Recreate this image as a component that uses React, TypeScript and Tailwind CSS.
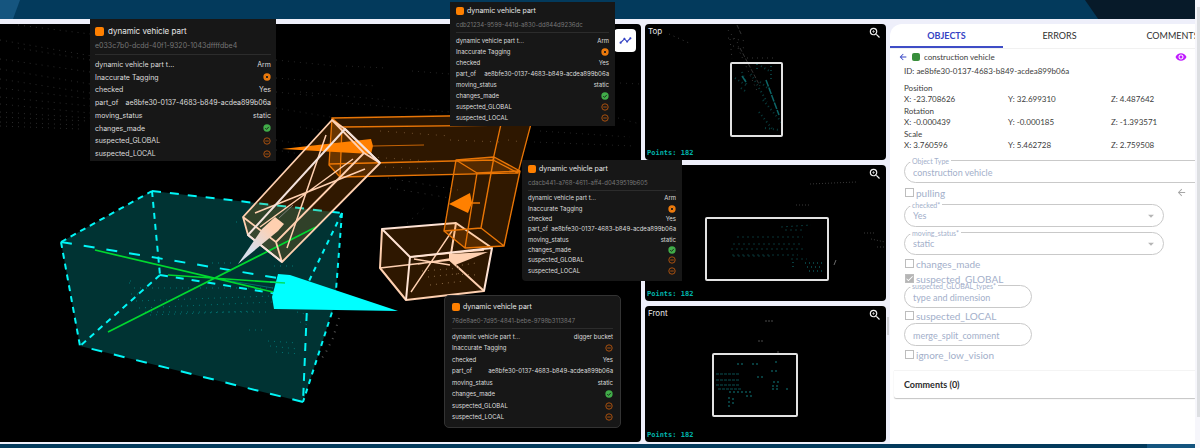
import React, { useState } from 'react';
import { clsx } from 'clsx';
import { MdArrowBack, MdArrowDropDown, MdCheck, MdTimeline, MdVisibility, MdZoomIn } from 'react-icons/md';

type Flag = 'error' | 'ok' | 'none';

interface PartCardProps {
  id: string;
  type: string;
  tagging: Flag;
  large?: boolean;
  className: string;
}

const PARENT_ID = 'ae8bfe30-0137-4683-b849-acdea899b06a';

const TRANSFORM = [
  { name: 'Position', values: ['X: -23.708626', 'Y: 32.699310', 'Z: 4.487642'] },
  { name: 'Rotation', values: ['X: -0.000439', 'Y: -0.000185', 'Z: -1.393571'] },
  { name: 'Scale', values: ['X: 3.760596', 'Y: 5.462728', 'Z: 2.759508'] },
];

const FlagIcon: React.FC<{ flag: Flag }> = ({ flag }) => {
  if (flag === 'none') {
    return (
      <svg viewBox="0 0 16 16" className="w-2 h-2" fill="none" stroke="#b8570f" strokeWidth="1.8">
        <circle cx="8" cy="8" r="6.4" />
        <path d="M4.5 8h7" />
      </svg>
    );
  }
  return (
    <svg viewBox="0 0 16 16" className="w-2 h-2" fill="none" stroke="#181818" strokeWidth="1.8">
      <circle cx="8" cy="8" r="7.3" fill={flag === 'ok' ? '#41ad49' : '#ee7b0c'} stroke="none" />
      <path d={flag === 'ok' ? 'M4.5 8.2l2.5 2.6 4.6-5' : 'M5.8 5.8l4.4 4.4M10.2 5.8l-4.4 4.4'} />
    </svg>
  );
};

// Hover card with the attributes of one vehicle part
const PartCard: React.FC<PartCardProps> = ({ id, type, tagging, large, className }) => {
  const rows: [string, React.ReactNode][] = [
    ['dynamic vehicle part t...', type],
    ['Inaccurate Tagging', <FlagIcon flag={tagging} />],
    ['checked', 'Yes'],
    ['part_of', PARENT_ID],
    ['moving_status', 'static'],
    ['changes_made', <FlagIcon flag="ok" />],
    ['suspected_GLOBAL', <FlagIcon flag="none" />],
    ['suspected_LOCAL', <FlagIcon flag="none" />],
  ];

  return (
    <section className={clsx('absolute flex flex-col bg-[#171717] text-[#dedede] whitespace-nowrap', large ? 'text-[7px]' : 'text-[6px]', className)}>
      <div className={clsx('flex items-center shrink-0', large ? 'h-[14px] gap-1' : 'h-3 gap-[3px]')}>
        <span className={clsx('rounded-[2px] bg-[#ff8000]', large ? 'w-[9px] h-[9px]' : 'w-2 h-2')} />
        <h3 className={clsx('text-[#e8e8e8]', large ? 'text-[8px]' : 'text-[7px]')}>dynamic vehicle part</h3>
      </div>
      <p className={clsx('shrink-0 border-b border-[#2c2c2c] text-[#767676]', large ? 'h-[17px] leading-4' : 'h-4 leading-[15px]')}>{id}</p>
      <dl className={clsx('flex-1 grid auto-rows-fr', large ? 'mt-[3px]' : 'mt-0.5')}>
        {rows.map(([label, value]) => (
          <div key={label} className="flex items-center justify-between leading-none">
            <dt>{label}</dt>
            <dd>{value}</dd>
          </div>
        ))}
      </dl>
    </section>
  );
};

// Lidar returns drawn as dotted strokes
const Points: React.FC<{ d: string; color: string; gap?: string; width?: number }> = ({ d, color, gap = '1 5', width = 1 }) => (
  <path d={d} fill="none" stroke={color} strokeWidth={width} strokeDasharray={gap} />
);

const Scene = () => (
  <svg viewBox="0 24 641 418" preserveAspectRatio="xMinYMin slice" className="absolute inset-0 w-full h-full">
    <defs>
      <linearGradient id="tip" x1="0" y1="1" x2="1" y2="0">
        <stop offset="0.3" stopColor="#d9deea" />
        <stop offset="0.75" stopColor="#ffd0b0" />
      </linearGradient>
    </defs>

    {/* Ground points */}
    <Points color="#2b2b2b" d="M18 25l72 9M0 40l92 16M18 48l72 12M0 59l90 13M0 69l90 15M0 79l90 14M0 88l90 11M0 97l90 9M0 104l90 9M0 112l90 6M0 117l88 4M0 122l80 3M0 126l80 3" />
    <Points color="#252525" d="M276 60l60 6M346 66l40 2M412 71l38 3M276 78l100 8M300 92l88 8M276 108l60 10M300 127l24 4M346 103l104 9M534 142l100 4M540 131l90 6M620 83l20 1M618 118l22 6M276 92l40 4M276 150l24 4M276 140l50 8" />
    <Points color="#333333" d="M402 228l24-22M388 178l70 12M390 188l60 10" gap="1 6" />

    {/* Construction vehicle */}
    <path d="M61 242L152 191L342 213L335 303L303 402L80 346Z" fill="#003333" />
    <Points color="#007272" d="M130 281h1M129 283h1M134 288h140M131 294h8M136 301l136-5M139 308l133-6M145 312h125M150 315l106-4M249 330h14M268 341l30 2M270 346l28 3M276 352l24 2" />
    <Points color="#007878" d="M212 263h20M274 266h24M236 222h1M297 312l12 3M300 322l8 3" />
    <g fill="none" stroke="#00f6f6" strokeWidth="2">
      <path d="M61 242L308 283" strokeDasharray="11 12" />
      <path d="M152 191L342 213" strokeDasharray="9 9" />
      <path d="M61 242L152 191M152 191L160 275M160 275L80 346M61 242L80 346" strokeDasharray="6 5" />
      <path d="M160 275L335 303" strokeDasharray="8 8" />
      <path d="M303 402L80 346" strokeDasharray="11 12" />
      <path d="M342 213L308 283M342 213L335 303M335 303L303 402" strokeDasharray="5 5" />
      <path d="M308 283L303 402" strokeDasharray="8 7" />
    </g>
    <path d="M225 280L273 288" stroke="#006a6a" />

    {/* Boom */}
    <path d="M332 118L503 115L531 124L518 173L340 177L329 165Z" fill="#ff8000" fillOpacity="0.18" />
    <path d="M332 118L342 127L340 177L329 165Z" fill="#ff8000" fillOpacity="0.12" />
    <g fill="none" stroke="#e87506" strokeWidth="1.3">
      <path d="M332 118L503 115L531 124L518 173L340 177L329 165ZM332 118L342 127L340 177M342 127L531 125M329 164L493 160L503 115M493 160L518 173" />
      <path d="M373 146L424 145" strokeWidth="0.8" />
    </g>
    <Points color="#70502e" d="M380 131l70 5M370 157l60 4M385 167l50 2M450 140l50 2M508 140l14 2" gap="1 7" />

    {/* Bucket */}
    <path d="M382 229L456 223L492 248L484 291L406 300L380 268Z" fill="#ff8000" fillOpacity="0.18" />
    <g fill="none" stroke="#ffd0b0" strokeWidth="2" strokeLinejoin="round">
      <path d="M382 229L380 268L406 300L484 291L450 260L456 223" />
      <path d="M380 268L450 260M452 231L411 292M410 257L484 250M414 259L450 265M418 264L462 257" strokeWidth="1.4" />
      <path d="M382 229L456 223L492 248L410 257ZM410 257L406 300M492 248L484 291" stroke="#ffe3d4" />
    </g>
    <path d="M449 254L488 252L455 265L449 260Z" fill="#ffd0b0" />
    <Points color="#8a6a45" d="M422 271l40-3M428 277l36-4M430 285l34-4M456 266l20-3M456 274l20 1" gap="1 5" />

    {/* Stick */}
    <path d="M456 160L494 157L520 171L504 246L465 248L444 231Z" fill="#ff8000" fillOpacity="0.19" />
    <g fill="none" stroke="#e87506" strokeWidth="1.4" strokeLinejoin="round">
      <path d="M456 160L494 157L520 171L477 173ZM444 231L481 228L504 246L465 248ZM456 160L444 231M494 157L481 228M520 171L504 246M477 173L465 248M470 203H480" />
    </g>
    <path d="M449 204L470 193L472 203L468 213Z" fill="#ff8000" />

    {/* Arm */}
    <path d="M332 120L345 129L380 163L282 262L248 235L243 217Z" fill="#ff8000" fillOpacity="0.19" />
    <path d="M243 217L276 242L282 262L248 235Z" fill="#ffffff" fillOpacity="0.04" />
    <path d="M282 149L371 139L373 146L371 154Z" fill="#ff8000" />
    <g stroke="#00d830" strokeWidth="1.7">
      <path d="M95 250L273 292M168 275L285 283M108 332L316 227" />
    </g>
    <g fill="none" stroke="#ffd0b0" strokeWidth="1.8" strokeLinejoin="round">
      <path d="M332 120L243 217L248 235L282 262L380 163L345 129ZM332 120L364 153L380 163M364 153L276 242L243 217M276 242L282 262" />
      <path d="M326 135L287 248M353 159L260 227M365 169L255 213" strokeWidth="1.5" />
      <path d="M380 163L345 129L248 235L282 262" stroke="#f3e2dc" strokeWidth="2" />
      <path d="M279 218L293 205" stroke="#8b8b8b" strokeWidth="0.8" />
    </g>
    <path d="M275 217L284 224L278 231L238 264L262 229Z" fill="url(#tip)" />

    {/* Heading arrow */}
    <path d="M278 274L290 275L398 311L274 309L272 297Z" fill="#00ffff" />
    <path d="M270 282L285 283" stroke="#00e060" strokeWidth="1.7" />
    <Points color="#505050" d="M339 318l-6 20-8 16-4 5" gap="1 6" width={2} />
  </svg>
);

const SideView: React.FC<{ label?: string; children: React.ReactNode }> = ({ label, children }) => (
  <section className="relative flex-1 min-h-0 flex flex-col justify-between rounded-sm bg-black overflow-hidden">
    <svg viewBox="0 0 241 136" className="absolute inset-0 w-full h-full">
      {children}
    </svg>
    <div className="relative flex items-start justify-between pl-[3px] pr-1 pt-0.5">
      <h2 className="font-[Inter] text-[8px] leading-[11px] text-[#e8e8e8]">{label}</h2>
      <button aria-label="Zoom in" className="text-[#eeeeee]">
        <MdZoomIn className="w-[14px] h-[14px]" />
      </button>
    </div>
    <p className="relative pl-0.5 pb-0.5 font-['DejaVu_Sans_Mono',monospace] text-[7px] font-bold leading-[10px] text-[#00b4ac]">Points: 182</p>
  </section>
);

const Check: React.FC<{ id: string; checked?: boolean; className: string }> = ({ id, checked, className }) => (
  <div className={clsx('flex items-center gap-0.5 px-px text-[10px] text-[#a3afca]', className)}>
    <span className="relative flex">
      <input
        id={id}
        type="checkbox"
        defaultChecked={checked}
        disabled
        className="appearance-none w-[9px] h-[9px] border border-[#bdbdbd] bg-white checked:bg-[#b5b5b5]"
      />
      {checked && <MdCheck className="absolute inset-0 w-[9px] h-[9px] text-white" />}
    </span>
    <label htmlFor={id} className="leading-none">{id}</label>
  </div>
);

const Field: React.FC<{ id: string; label?: string; value: string; select?: boolean; className: string }> = ({ id, label, value, select, className }) => {
  const box = 'w-full h-full appearance-none rounded-full border border-[#c9c9c9] bg-transparent px-2 pt-px text-[9px] text-[#a3afca] placeholder:text-[#a3afca] opacity-100';

  return (
    <div className={clsx('relative h-[23px]', className)}>
      {select ? (
        <select id={id} disabled defaultValue={value} className={box}>
          <option>{value}</option>
        </select>
      ) : (
        <input id={id} disabled aria-label={id} defaultValue={label ? value : ''} placeholder={value} className={box} />
      )}
      {label && (
        <label htmlFor={id} className="absolute left-[6px] top-0 h-[2px] px-[2px] bg-white text-[7px] leading-[2px] text-[#a3afca]">
          {label}
        </label>
      )}
      {select && <MdArrowDropDown className="absolute right-[6px] top-[5px] w-[14px] h-[14px] text-[#b5b5b5] pointer-events-none" />}
    </div>
  );
};

const ObjectPanel = () => {
  const [tab, setTab] = useState('OBJECTS');

  return (
    <aside className="w-[305px] shrink-0 overflow-hidden rounded-tl-xl bg-white font-[Lato] text-[8px] text-[#3c3c3c]">
      <nav className="flex h-[25px] w-[339px] border-b border-[#f1f1f1]">
        {['OBJECTS', 'ERRORS', 'COMMENTS'].map((name) => (
          <button
            key={name}
            onClick={() => setTab(name)}
            className={clsx('flex-1 border-b-2 pt-0.5 text-[9px]', tab === name ? 'border-[#3f4dc6] font-bold text-[#3443c4]' : 'border-transparent text-[#303030]')}
          >
            {name}
          </button>
        ))}
      </nav>

      <div className="flex h-4 items-center pl-2 pr-2">
        <button aria-label="Back" className="text-[#3443c4]">
          <MdArrowBack className="w-[10px] h-[10px]" />
        </button>
        <span className="ml-1 mr-1 w-2 h-2 rounded-[2px] bg-[#388e3c]" />
        <span className="flex-1">construction vehicle</span>
        <button aria-label="Toggle visibility" className="text-[#c01cff]">
          <MdVisibility className="w-3 h-3" />
        </button>
      </div>

      <div className="pl-[14px]">
        <p className="h-[13px] leading-[13px]">ID: {PARENT_ID}</p>
        <dl className="mt-1">
          {TRANSFORM.map(({ name, values }) => (
            <div key={name}>
              <dt className="leading-3">{name}</dt>
              <dd className="grid grid-cols-[104px_103px_auto] leading-[11px]">
                {values.map((value) => <span key={value}>{value}</span>)}
              </dd>
            </div>
          ))}
        </dl>

        <form className="mt-[9px]">
          <Field id="Object Type" label="Object Type" value="construction vehicle" className="w-[320px]" />
          <div className="flex items-center justify-between pr-2">
            <Check id="pulling" className="h-[19px]" />
            <button type="button" aria-label="Reset" className="text-[#a6a6a6]">
              <MdArrowBack className="w-[11px] h-[11px]" />
            </button>
          </div>
          <Field id="checked" label="checked*" value="Yes" select className="mt-0.5 w-[260px]" />
          <Field id="moving_status" label="moving_status*" value="static" select className="mt-[5px] w-[260px]" />
          <Check id="changes_made" className="h-[17px]" />
          <Check id="suspected_GLOBAL" checked className="h-[13px]" />
          <Field id="suspected_GLOBAL_types" label="suspected_GLOBAL_types*" value="type and dimension" className="w-32" />
          <Check id="suspected_LOCAL" className="h-[15px]" />
          <Field id="merge_split_comment" value="merge_split_comment" className="w-32" />
          <Check id="ignore_low_vision" className="h-[17px]" />
        </form>
      </div>

      <section className="mt-[7px] ml-1 h-7 rounded-bl-[2px] border-t border-t-[#f4f4f4] pl-[10px] shadow-[0_1px_1px_#c4c4c4]">
        <h2 className="text-[9px] font-bold leading-7 text-[#2b2b2b]">Comments (0)</h2>
      </section>
    </aside>
  );
};

export default function App() {
  return (
    <div className="relative flex min-h-screen overflow-hidden bg-[#eeeffa] font-[Inter]">
      <div className="flex min-w-0 flex-1 flex-col">
        <header className="flex h-[19px] shrink-0 justify-between bg-[#033a5c]">
          <span className="w-5 bg-[#15557f] [clip-path:polygon(0_0,100%_0,65%_100%,0_100%)]" />
          <span className="w-[110px] bg-[#071a29] [clip-path:polygon(0_0,100%_0,100%_100%,12%_100%)]" />
        </header>

        <div className="flex min-h-0 flex-1 gap-1 pt-[5px]">
          <main className="relative mb-0.5 flex min-w-0 flex-1 items-start justify-end overflow-hidden rounded-r-sm bg-black pr-[5px] pt-[5px]">
            <Scene />
            <button aria-label="Trajectory" className="relative flex h-[23px] w-[22px] items-center justify-center rounded-sm bg-white text-[#3443c4]">
              <MdTimeline className="w-[13px] h-[13px]" />
            </button>
          </main>

          <div className="relative mb-0.5 flex w-[241px] shrink-0 flex-col gap-[5px]">
            <SideView label="Top">
              <Points color="#3a3a3a" d="M24 10l20 9M83 6l12 16M83 14l18 3M85 15l2 20M88 22l12 2M102 34h26M93 24l20 45" gap="1 4" />
              <path d="M92 1l5 11M95 24l20 38" fill="none" stroke="#333333" strokeDasharray="4 2" />
              <Points color="#083b3c" d="M90 54l12 8M97 48l5 14M112 40v8M126 38v20M106 50l16 28M115 58l10 8M114 88l14 18M118 76l20 24M120 104l14 2M96 64l4 3M116 42l10 6" gap="1 3" width={2} />
              <path d="M121 56l13 35" stroke="#0d6668" strokeWidth="1.5" strokeDasharray="7 1" />
              <path d="M97 52l4 6" stroke="#0d6668" strokeWidth="1.5" />
              <rect x="86" y="39" width="51" height="73" rx="1" fill="none" stroke="#e2e2e2" strokeWidth="2" />
            </SideView>

            <SideView>
              <Points color="#3a3a3a" d="M165 19l46-2M151 40h14M219 68h10M226 74l14 3M232 82h9" gap="1 2" />
              <Points color="#083536" d="M92 72h66M88 79h70M86 84h73M87 90h66M88 91h40M136 62l30-2M140 65h20M146 94h16" gap="2 3" />
              <Points color="#083d3e" d="M160 98h18M162 102h16M164 106h14M148 97v8" gap="1 3" width={2} />
              <path d="M189 100l2-5" stroke="#6a6a6a" />
              <rect x="61" y="53" width="122" height="62" rx="1" fill="none" stroke="#e2e2e2" strokeWidth="2" />
            </SideView>

            <SideView label="Front">
              <Points color="#4a4a4a" d="M120 15h9M113 35h6M132 46h3" gap="2 1" />
              <Points color="#0a5052" d="M71 68h24M71 74h23M71 79h24M73 83h23" gap="3 1" />
              <Points color="#083d3e" d="M92 58h8M107 58h6M126 65h8M112 71h8M128 76h6M127 80h6M127 83h6M141 83h4M130 56h2M84 86h22M101 90h6M84 91v12M88 92v8" gap="2 2" width={2} />
              <rect x="68" y="48" width="84" height="62" rx="1" fill="none" stroke="#e2e2e2" strokeWidth="2" />
            </SideView>

            {/* Resize handle */}
            <span className="absolute -right-[3px] top-[70%] h-[18px] w-0.5 bg-[#cfd0d6]" />
          </div>

          <ObjectPanel />
        </div>

        <footer className="flex h-1 shrink-0 justify-end bg-[#033a5c]">
          <span className="w-12 bg-[#15557f]" />
        </footer>
      </div>

      {/* Page scroll bar */}
      <div className="w-[5px] shrink-0 bg-[#f6f6fb] pl-0.5 pt-[7px]">
        <div className="h-[410px] bg-[#dddfe2]" />
      </div>

      <PartCard
        id="e033c7b0-dcdd-40f1-9320-1043dffffdbe4"
        type="Arm"
        tagging="error"
        large
        className="left-[90px] top-[19px] h-[142px] w-[186px] px-[5px] pt-[5px] pb-px"
      />
      <PartCard
        id="cdb21234-9599-441d-a830-dd844d9236dc"
        type="Arm"
        tagging="error"
        className="left-[450px] top-0.5 h-[124px] w-[165px] px-[6px] pt-[3px] pb-[3px]"
      />
      <PartCard
        id="cdacb441-a768-4611-aff4-d0439519b605"
        type="Arm"
        tagging="error"
        className="left-[522px] top-[160px] h-[121px] w-[160px] rounded-bl px-[6px] pt-[3px] pb-[5px]"
      />
      <PartCard
        id="76de8ae0-7d95-4841-bebe-9798b3113847"
        type="digger bucket"
        tagging="none"
        className="left-[444px] top-[295px] h-[133px] w-[177px] rounded-[5px] border border-[#333333] px-[7px] pt-[5px] pb-1"
      />
    </div>
  );
}
